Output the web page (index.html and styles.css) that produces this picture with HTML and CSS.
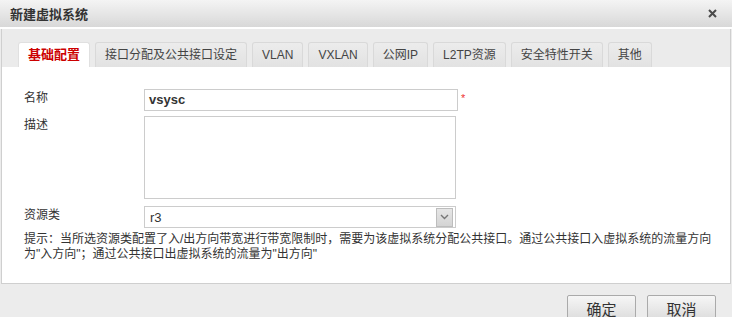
FILE: index.html
```html
<!DOCTYPE html>
<html lang="zh">
<head>
    <meta charset="UTF-8">
    <title>新建虚拟系统</title>
    <link rel="stylesheet" href="styles.css">
</head>
<body>
    <div class="dialog">
        <div class="title-bar">
            <span class="title">新建虚拟系统</span>
            <svg class="close" width="9" height="9" viewBox="0 0 9 9"><path d="M1 1 L8 8 M8 1 L1 8" stroke="#4a4a4a" stroke-width="2"/></svg>
        </div>
        <div class="panel">
            <div class="tab-strip">
                <div class="tab active">基础配置</div>
                <div class="tab">接口分配及公共接口设定</div>
                <div class="tab">VLAN</div>
                <div class="tab">VXLAN</div>
                <div class="tab">公网IP</div>
                <div class="tab">L2TP资源</div>
                <div class="tab">安全特性开关</div>
                <div class="tab">其他</div>
            </div>
            <div class="form">
                <div class="row">
                    <label class="label">名称</label>
                    <div class="field">
                        <div class="input">vsysc</div>
                        <span class="required">*</span>
                    </div>
                </div>
                <div class="row">
                    <label class="label">描述</label>
                    <div class="field">
                        <div class="textarea"></div>
                    </div>
                </div>
                <div class="row row-select">
                    <label class="label">资源类</label>
                    <div class="field">
                        <div class="select">
                            <span class="select-value">r3</span>
                            <span class="select-btn">
                                <svg width="9" height="6" viewBox="0 0 9 6"><path d="M1 1 L4.5 4.5 L8 1" fill="none" stroke="#777" stroke-width="1.4"/></svg>
                            </span>
                        </div>
                    </div>
                </div>
                <p class="hint">提示：当所选资源类配置了入/出方向带宽进行带宽限制时，需要为该虚拟系统分配公共接口。通过公共接口入虚拟系统的流量方向为"入方向"；通过公共接口出虚拟系统的流量为"出方向"</p>
            </div>
        </div>
        <div class="footer">
            <button class="btn">确定</button>
            <button class="btn">取消</button>
        </div>
    </div>
</body>
</html>
```

FILE: styles.css
```css
body {
    margin: 0;
    font-family: "Liberation Sans", Arial, "Noto Sans CJK SC", sans-serif;
    font-size: 12px;
    color: #333;
    background-color: #ececec;
}
.dialog {
    width: 732px;
    height: 317px;
    overflow: hidden;
    background-color: #ececec;
}
.title-bar {
    height: 26px;
    display: flex;
    align-items: center;
    justify-content: space-between;
    padding: 0 15px 1px 10px;
    background: linear-gradient(#f4f4f4, #d8d8d8);
    border-bottom: 2px solid #fff;
}
.title {
    font-size: 13px;
    font-weight: bold;
    color: #333;
}
.panel {
    margin: 0 1px;
    border: 1px solid #cfcfcf;
    border-top: none;
    background-color: #fff;
}
.tab-strip {
    height: 25px;
    display: flex;
    align-items: flex-end;
    gap: 5px;
    padding: 13px 0 0 16px;
    background-color: #ebebeb;
}
.tab {
    height: 24px;
    line-height: 24px;
    padding: 0 9px;
    border: 1px solid #d9d9d9;
    border-bottom: none;
    border-radius: 3px 3px 0 0;
    background: linear-gradient(#ececec, #e2e2e2);
    color: #444;
}
.tab.active {
    background: #fff;
    border-color: #e0e0e0;
    color: #c00;
    font-weight: bold;
    font-size: 13px;
}
.form {
    height: 194px;
    padding: 22px 0 0 22px;
}
.row {
    display: flex;
    margin-bottom: 5px;
}
.row-select {
    margin-top: 7px;
}
.label {
    width: 120px;
    padding-top: 1px;
    line-height: 16px;
}
.field {
    display: flex;
    align-items: flex-start;
}
.input {
    width: 304px;
    height: 20px;
    line-height: 20px;
    padding: 0 4px;
    border: 1px solid #ccc;
    font-size: 13px;
    font-weight: bold;
    color: #333;
}
.required {
    color: #e33;
    font-size: 11px;
    margin: 3px 0 0 3px;
}
.textarea {
    width: 310px;
    height: 81px;
    border: 1px solid #ccc;
}
.select {
    width: 310px;
    height: 20px;
    border: 1px solid #ccc;
    display: flex;
    align-items: center;
    justify-content: space-between;
}
.select-value {
    padding-left: 5px;
    font-size: 13px;
}
.select-btn {
    width: 15px;
    height: 17px;
    margin-right: 2px;
    display: flex;
    align-items: center;
    justify-content: center;
    background: linear-gradient(#e6e6e6, #d4d4d4);
    border: 1px solid #bdbdbd;
}
.hint {
    width: 700px;
    margin: -1px 0 0 0;
    line-height: 15px;
}
.footer {
    display: flex;
    justify-content: flex-end;
    gap: 11px;
    padding: 11px 16px 0 0;
}
.btn {
    width: 69px;
    height: 26px;
    border: 1px solid #aaa;
    border-radius: 2px;
    background: linear-gradient(#f6f6f6, #dcdcdc);
    font-family: "Liberation Sans", "Noto Sans CJK SC", sans-serif;
    font-size: 15px;
    color: #333;
    padding: 0;
}
```
